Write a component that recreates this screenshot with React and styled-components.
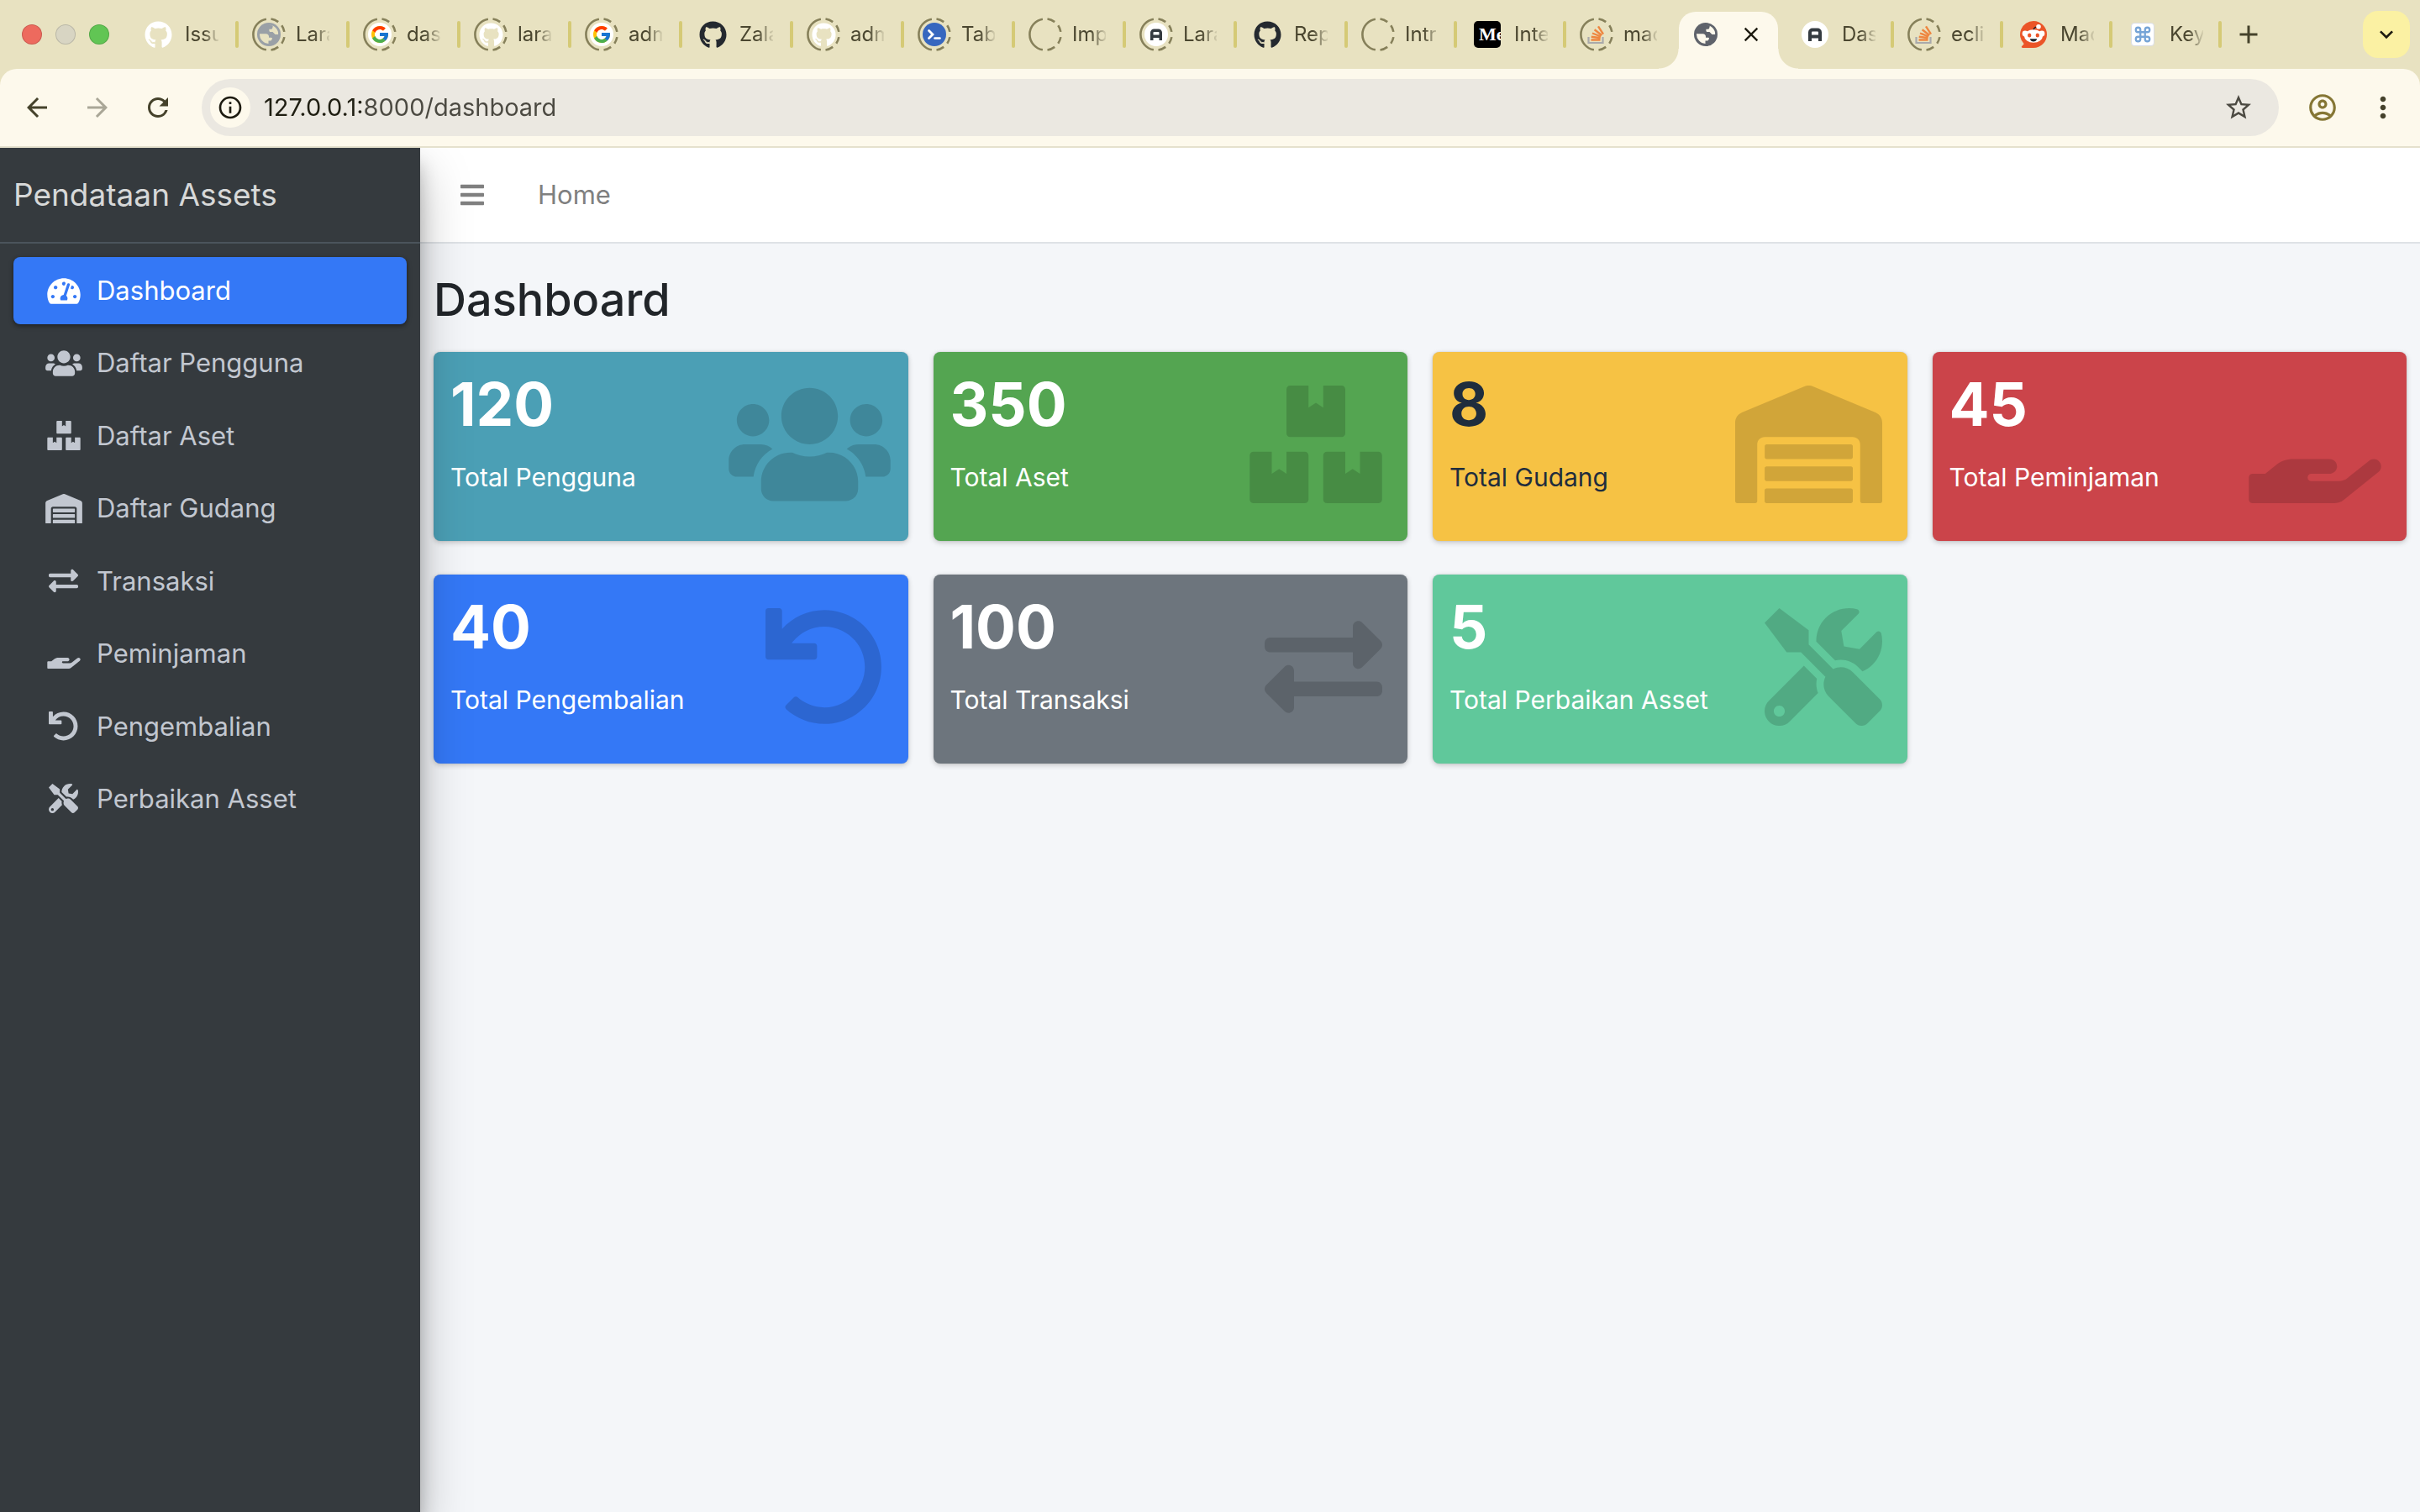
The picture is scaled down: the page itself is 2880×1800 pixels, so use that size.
import React from "react";
import styled, { createGlobalStyle, css } from "styled-components";
import {
  FaTachometerAlt,
  FaUsers,
  FaBoxes,
  FaWarehouse,
  FaExchangeAlt,
  FaHandHolding,
  FaUndo,
  FaTools,
  FaBars,
  FaGithub,
} from "react-icons/fa";
import {
  MdArrowBack,
  MdArrowForward,
  MdRefresh,
  MdInfoOutline,
  MdStarBorder,
  MdMoreVert,
  MdClose,
  MdAdd,
  MdKeyboardArrowDown,
  MdOutlineAccountCircle,
} from "react-icons/md";
import { FcGoogle } from "react-icons/fc";
import { Command } from "lucide-react";

const GlobalStyle = createGlobalStyle`
  *, *::before, *::after { box-sizing: border-box; }
  body {
    margin: 0;
    font-family: Inter, "Liberation Sans", sans-serif;
    font-size: 31px;
    line-height: 48px;
    color: #212529;
    background: #f4f6f9;
  }
  button, input { font: inherit; color: inherit; border: 0; padding: 0; background: none; }
  svg { display: block; flex: none; }
`;

const Window = styled.div`
  display: flex;
  flex-direction: column;
  min-height: 100vh;
`;

/* ---------- Browser tab strip ---------- */

const TabStrip = styled.div`
  display: flex;
  align-items: stretch;
  height: 82px;
  padding: 0 12px 0 26px;
  background: #e8e2c1;
`;

const TrafficLights = styled.div`
  display: flex;
  align-items: center;
  gap: 16px;
  margin-right: 22px;
`;

const Light = styled.span`
  width: 24px;
  height: 24px;
  border-radius: 50%;
  background: ${(p) => p.$color};
  border: 1px solid rgba(0, 0, 0, 0.14);
`;

const Tab = styled.button`
  display: flex;
  align-items: center;
  flex: none;
  width: ${(p) => (p.$wide ? 132 : 130)}px;
  padding-left: 16px;
  color: #4a462f;
  font-size: 24px;
  line-height: 30px;

  ${(p) =>
    !p.$last &&
    css`
      &::after {
        content: "";
        width: 4px;
        height: 32px;
        margin-left: auto;
        border-radius: 2px;
        background: #d5ca76;
      }
    `}
`;

const TabLabel = styled.span`
  width: 40px;
  margin-left: 12px;
  overflow: hidden;
  text-align: left;
  white-space: nowrap;
  mask-image: linear-gradient(to right, #000 22px, transparent 42px);
`;

const ActiveTab = styled.div`
  position: relative;
  display: flex;
  align-items: center;
  justify-content: space-between;
  flex: none;
  width: 118px;
  margin: 14px 8px 0 4px;
  padding: 0 18px 14px;
  border-radius: 20px 20px 0 0;
  background: #fdf9ec;

  &::before,
  &::after {
    content: "";
    position: absolute;
    bottom: 0;
    width: 24px;
    height: 24px;
  }
  &::before {
    right: 100%;
    background: radial-gradient(circle at 0 0, transparent 23px, #fdf9ec 24px);
  }
  &::after {
    left: 100%;
    background: radial-gradient(circle at 100% 0, transparent 23px, #fdf9ec 24px);
  }
`;

const IconButton = styled.button`
  display: flex;
  align-items: center;
  justify-content: center;
  flex: none;
  width: ${(p) => p.$size}px;
  height: ${(p) => p.$size}px;
  color: ${(p) => p.$color || "#45422b"};
`;

const NewTab = styled(IconButton)`
  align-self: center;
  margin-left: 14px;
`;

const TabSearch = styled.button`
  display: flex;
  align-items: center;
  justify-content: center;
  align-self: center;
  width: 56px;
  height: 56px;
  margin-left: auto;
  border-radius: 18px;
  background: #fbf1a3;
  color: #1d1b10;
`;

const FaviconBox = styled.span`
  display: grid;
  place-items: center;
  flex: none;
  width: 40px;
  height: 40px;

  > * {
    grid-area: 1 / 1;
  }
`;

const Disc = styled.span`
  display: grid;
  place-items: center;
  width: ${(p) => p.$size}px;
  height: ${(p) => p.$size}px;
  border-radius: 50%;
  background: #fff;
`;

const MediumLogo = styled.span`
  width: 32px;
  height: 32px;
  padding-left: 6px;
  overflow: hidden;
  border-radius: 5px;
  background: #000;
  color: #fff;
  font-family: "Liberation Serif", serif;
  font-weight: 700;
  font-size: 22px;
  line-height: 32px;
  text-align: left;
`;

const KeyCap = styled.span`
  display: grid;
  place-items: center;
  width: 28px;
  height: 28px;
  border-radius: 4px;
  border: 1px solid #d9dce4;
  background: #fff;
  color: #76a4d6;
`;

const LoadingRing = () => (
  <svg width="40" height="40" viewBox="0 0 40 40" fill="none" stroke="#86805a" strokeWidth="2.6">
    <circle
      cx="20"
      cy="20"
      r="18.6"
      pathLength="360"
      transform="rotate(-90 20 20)"
      strokeDasharray="29 18 25 20 25 18 29 18 160 18"
      strokeDashoffset="-8"
    />
  </svg>
);

const GlobeMark = ({ body, land }) => (
  <svg width="28" height="28" viewBox="0 0 28 28">
    <circle cx="14" cy="14" r="14" fill={body} />
    <g fill={land}>
      <path d="M3 13.200h7.500c2.200 0 3.500 1.300 3.500 3.300v1.200h2.600c1.300 0 1.700 1 1.200 1.900l-.9 1.300c-.3.500-.9.700-1.500.7h-1.900v3.300A11.200 11.200 0 0 1 3 13.200z" />
      <path d="M11.300 3.100c3-.7 5.500-.2 7.500 1l-.6 2.300c-.3.900-1 1.300-2 1.300h-1.800v1.800c0 .9.6 1.500 1.500 1.500h2.600l3 3h3.600c0-1 .1-1.900-.3-3.400-1.500-5-6.800-9-13.500-7.500z" />
    </g>
  </svg>
);

const AdminMark = ({ size }) => (
  <svg width={size} height={size} viewBox="0 0 32 32">
    <circle cx="16" cy="16" r="16" fill="#fff" />
    <path d="M10 24V13.500a3 3 0 0 1 3-3h6a3 3 0 0 1 3 3V24M10 18.500h12" fill="none" stroke="#343a40" strokeWidth="4" />
  </svg>
);

const StackMark = () => (
  <svg width="26" height="26" viewBox="0 0 26 26" fill="none">
    <path d="M3.500 16v7h17v-7" stroke="#a9a9ab" strokeWidth="2.200" />
    <g stroke="#ee8640" strokeWidth="2.400">
      <path d="M6.500 19.500h11M6.700 15.700l11 1.500M8 11.500l10.200 4M10.600 7.300l8.600 6.700M15 3.400l6 9.200" />
    </g>
  </svg>
);

const TerminalMark = () => (
  <svg width="28" height="28" viewBox="0 0 28 28" fill="none">
    <circle cx="14" cy="14" r="14" fill="#3767bf" />
    <path d="M7.500 9.500l4.500 4.500-4.500 4.500" stroke="#fff" strokeWidth="2.800" strokeLinecap="round" />
    <path d="M14.500 18.500h6" stroke="#fff" strokeWidth="2.600" strokeLinecap="round" />
  </svg>
);

const RedditMark = () => (
  <svg width="32" height="32" viewBox="0 0 32 32">
    <path d="M16 0a16 16 0 1 1 0 32H3.200c-1.400 0-1.900-1.200-1-2.100l2.500-2.600A16 16 0 0 1 16 0z" fill="#eb5528" />
    <path d="M16 11.500c.2-3 1.500-4.500 4.600-4.400" fill="none" stroke="#16202a" strokeWidth="1.400" />
    <circle cx="22" cy="6.800" r="2.800" fill="#fff" />
    <circle cx="6" cy="15" r="3.400" fill="#fff" />
    <circle cx="26" cy="15" r="3.400" fill="#fff" />
    <ellipse cx="16" cy="18" rx="11" ry="7.800" fill="#fff" />
    <ellipse cx="11.200" cy="17" rx="2.200" ry="2.500" fill="#eb5528" />
    <ellipse cx="20.800" cy="17" rx="2.200" ry="2.500" fill="#eb5528" />
    <path d="M11.800 21.200h8.400c-.6 2.200-2.200 3.200-4.200 3.200s-3.600-1-4.200-3.200z" fill="#16202a" />
  </svg>
);

const FAVICONS = {
  githubWhite: <FaGithub size={33} color="#fff" />,
  githubDark: <FaGithub size={33} color="#24292f" />,
  githubSmall: <FaGithub size={29} color="#fff" />,
  globe: <GlobeMark body="#9aa0a6" land="#e8e2c1" />,
  google: (
    <Disc $size={28}>
      <FcGoogle size={24} />
    </Disc>
  ),
  terminal: <TerminalMark />,
  adminSmall: <AdminMark size={28} />,
  admin: <AdminMark size={32} />,
  medium: <MediumLogo>Me</MediumLogo>,
  stack: <StackMark />,
  reddit: <RedditMark />,
  command: (
    <KeyCap>
      <Command size={22} strokeWidth={2.5} />
    </KeyCap>
  ),
};

const TABS_BEFORE = [
  { label: "Issu", icon: "githubWhite", wide: true },
  { label: "Lara", icon: "globe", ring: true, wide: true },
  { label: "das", icon: "google", ring: true, wide: true },
  { label: "lara", icon: "githubSmall", ring: true, wide: true },
  { label: "adm", icon: "google", ring: true, wide: true },
  { label: "Zala", icon: "githubDark", wide: true },
  { label: "adm", icon: "githubSmall", ring: true, wide: true },
  { label: "Tab", icon: "terminal", ring: true, wide: true },
  { label: "Imp", icon: "none", ring: true, wide: true },
  { label: "Lara", icon: "adminSmall", ring: true, wide: true },
  { label: "Rep", icon: "githubDark", wide: true },
  { label: "Intr", icon: "none", ring: true },
  { label: "Inte", icon: "medium" },
  { label: "mac", icon: "stack", ring: true, last: true },
];

const TABS_AFTER = [
  { label: "Das", icon: "admin" },
  { label: "ecli", icon: "stack", ring: true },
  { label: "Mac", icon: "reddit" },
  { label: "Key", icon: "command" },
];

const BrowserTab = ({ tab }) => (
  <Tab type="button" $wide={tab.wide} $last={tab.last}>
    <FaviconBox>
      {tab.ring && <LoadingRing />}
      {FAVICONS[tab.icon]}
    </FaviconBox>
    <TabLabel>{tab.label}</TabLabel>
  </Tab>
);

/* ---------- Browser toolbar ---------- */

const ToolbarBack = styled.div`
  background: #e8e2c1;
`;

const Toolbar = styled.div`
  display: flex;
  align-items: center;
  gap: 28px;
  height: 94px;
  padding: 0 20px;
  border-bottom: 2px solid #e5e1cd;
  border-radius: 20px 20px 0 0;
  background: #fdf9ec;
`;

const ToolbarGroup = styled.div`
  display: flex;
  gap: 24px;
`;

const AddressBar = styled.form`
  display: flex;
  align-items: center;
  flex: 1;
  height: 68px;
  padding: 0 24px 0 10px;
  border-radius: 34px;
  background: #ebe8e1;
`;

const SiteInfo = styled(IconButton)`
  border-radius: 50%;
  background: #fdf9ec;
`;

const AddressInput = styled.input`
  flex: 1;
  min-width: 0;
  margin: 0 16px;
  outline: none;
  font-size: 29px;
  line-height: 40px;
  color: transparent;
  background: linear-gradient(to right, #1f1e12 118px, #4b4941 118px);
  background-clip: text;
  -webkit-background-clip: text;
`;

/* ---------- Application ---------- */

const Page = styled.div`
  display: flex;
  flex: 1;
  overflow: hidden;
`;

const Sidebar = styled.aside`
  position: relative;
  z-index: 1;
  flex: none;
  width: 500px;
  background: #353a3e;
  box-shadow: 0 28px 56px rgba(0, 0, 0, 0.25), 0 20px 20px rgba(0, 0, 0, 0.22);
`;

const Brand = styled.a`
  display: flex;
  align-items: center;
  height: 114px;
  padding-left: 16px;
  border-bottom: 2px solid #4b545c;
  color: #d7d8d8;
  font-size: 37px;
  font-weight: 400;
  text-decoration: none;
  white-space: nowrap;
`;

const Menu = styled.nav`
  display: flex;
  flex-direction: column;
  justify-content: space-between;
  min-height: 717px;
  padding: 16px;
`;

const MenuLink = styled.a`
  display: flex;
  align-items: center;
  gap: 12px;
  height: 80px;
  padding: 0 32px;
  border-radius: 8px;
  color: #c2c7d0;
  text-decoration: none;
  white-space: nowrap;

  ${(p) =>
    p.$active &&
    css`
      background: #3478f6;
      color: #fff;
      box-shadow: 0 2px 6px rgba(0, 0, 0, 0.24), 0 2px 4px rgba(0, 0, 0, 0.24);
    `}
`;

const MenuIcon = styled.span`
  display: flex;
  justify-content: center;
  flex: none;
  width: 55px;
`;

const Main = styled.main`
  flex: 1;
  min-width: 0;
`;

const TopNav = styled.header`
  display: flex;
  align-items: center;
  gap: 64px;
  height: 114px;
  padding-left: 48px;
  border-bottom: 2px solid #dee2e6;
  background: #fff;
  color: #808080;
`;

const MenuToggle = styled.button`
  display: flex;
`;

const HomeLink = styled.a`
  color: inherit;
  text-decoration: none;
`;

const Content = styled.div`
  padding: 32px 16px;
`;

const Title = styled.h1`
  margin: 0 0 28px;
  font-size: 54px;
  font-weight: 500;
  line-height: 69px;
`;

const CardGrid = styled.div`
  display: grid;
  grid-template-columns: repeat(4, minmax(0, 1fr));
  gap: 40px 30px;
`;

const Card = styled.section`
  position: relative;
  padding: 20px;
  border-radius: 8px;
  background: ${(p) => p.$bg};
  color: ${(p) => (p.$dark ? "#1f2d3d" : "#fff")};
  box-shadow: 0 0 2px rgba(0, 0, 0, 0.125), 0 2px 6px rgba(0, 0, 0, 0.2);
`;

const CardValue = styled.h3`
  margin: 0 0 20px;
  font-size: 71px;
  font-weight: 700;
  line-height: 85px;
`;

const CardLabel = styled.p`
  margin: 0 0 32px;
  font-size: 30px;
`;

const CardIcon = styled.div`
  position: absolute;
  top: ${(p) => (p.$raised ? 33 : 40)}px;
  right: ${(p) => (p.$raised ? 21 : 30)}px;
  color: rgba(0, 0, 0, 0.15);
`;

/* ratio: the drawing's width for a height of one em. */
const ICONS = {
  gauge: { Icon: FaTachometerAlt, ratio: 1.125 },
  users: { Icon: FaUsers, ratio: 1.25 },
  boxes: { Icon: FaBoxes, ratio: 1.125 },
  warehouse: { Icon: FaWarehouse, ratio: 1.25 },
  exchange: { Icon: FaExchangeAlt, ratio: 1 },
  hand: { Icon: FaHandHolding, ratio: 1.125 },
  undo: { Icon: FaUndo, ratio: 1 },
  tools: { Icon: FaTools, ratio: 1 },
  bars: { Icon: FaBars, ratio: 0.875 },
};

const GlyphBox = styled.span`
  display: flex;

  svg {
    width: ${(p) => p.$w}px;
    height: ${(p) => p.$em}px;
  }
`;

const Glyph = ({ name, em }) => {
  const { Icon, ratio } = ICONS[name];
  return (
    <GlyphBox $em={em} $w={Math.ceil(em * ratio)}>
      <Icon />
    </GlyphBox>
  );
};

const MENU = [
  { label: "Dashboard", icon: "gauge", active: true },
  { label: "Daftar Pengguna", icon: "users" },
  { label: "Daftar Aset", icon: "boxes" },
  { label: "Daftar Gudang", icon: "warehouse" },
  { label: "Transaksi", icon: "exchange" },
  { label: "Peminjaman", icon: "hand" },
  { label: "Pengembalian", icon: "undo" },
  { label: "Perbaikan Asset", icon: "tools" },
];

const CARDS = [
  { value: 120, label: "Total Pengguna", bg: "#4b9fb5", icon: "users", raised: true },
  { value: 350, label: "Total Aset", bg: "#54a551", icon: "boxes" },
  { value: 8, label: "Total Gudang", bg: "#f6c244", icon: "warehouse", dark: true },
  { value: 45, label: "Total Peminjaman", bg: "#cb444a", icon: "hand" },
  { value: 40, label: "Total Pengembalian", bg: "#3478f6", icon: "undo" },
  { value: 100, label: "Total Transaksi", bg: "#6d757d", icon: "exchange" },
  { value: 5, label: "Total Perbaikan Asset", bg: "#60c89b", icon: "tools" },
];

export default function App() {
  return (
    <Window>
      <GlobalStyle />
      <TabStrip>
        <TrafficLights>
          <Light $color="#ed6a5e" />
          <Light $color="#d8d5c3" />
          <Light $color="#61c554" />
        </TrafficLights>
        {TABS_BEFORE.map((tab, i) => (
          <BrowserTab key={i} tab={tab} />
        ))}
        <ActiveTab>
          <GlobeMark body="#5f636b" land="#fdf9ec" />
          <IconButton type="button" aria-label="Close tab" $size={28} $color="#1d1b10">
            <MdClose size={28} />
          </IconButton>
        </ActiveTab>
        {TABS_AFTER.map((tab, i) => (
          <BrowserTab key={i} tab={tab} />
        ))}
        <NewTab type="button" aria-label="New tab" $size={36}>
          <MdAdd size={36} />
        </NewTab>
        <TabSearch type="button" aria-label="Search tabs">
          <MdKeyboardArrowDown size={32} />
        </TabSearch>
      </TabStrip>

      <ToolbarBack>
        <Toolbar>
          <ToolbarGroup>
            <IconButton type="button" aria-label="Back" $size={48}>
              <MdArrowBack size={36} />
            </IconButton>
            <IconButton type="button" aria-label="Forward" $size={48} $color="#aaa797">
              <MdArrowForward size={36} />
            </IconButton>
            <IconButton type="button" aria-label="Reload" $size={48}>
              <MdRefresh size={36} />
            </IconButton>
          </ToolbarGroup>
          <AddressBar onSubmit={(e) => e.preventDefault()}>
            <SiteInfo type="button" aria-label="Site information" $size={48} $color="#1d1b10">
              <MdInfoOutline size={32} />
            </SiteInfo>
            <AddressInput type="text" aria-label="Address" defaultValue="127.0.0.1:8000/dashboard" spellCheck={false} />
            <IconButton type="button" aria-label="Bookmark" $size={48} $color="#4b4941">
              <MdStarBorder size={36} />
            </IconButton>
          </AddressBar>
          <ToolbarGroup>
            <IconButton type="button" aria-label="Profile" $size={48} $color="#857634">
              <MdOutlineAccountCircle size={38} />
            </IconButton>
            <IconButton type="button" aria-label="More" $size={48}>
              <MdMoreVert size={40} />
            </IconButton>
          </ToolbarGroup>
        </Toolbar>
      </ToolbarBack>

      <Page>
        <Sidebar>
          <Brand href="#">Pendataan Assets</Brand>
          <Menu>
            {MENU.map(({ label, icon, active }) => (
              <MenuLink key={label} href="#" $active={active}>
                <MenuIcon>
                  <Glyph name={icon} em={35} />
                </MenuIcon>
                {label}
              </MenuLink>
            ))}
          </Menu>
        </Sidebar>
        <Main>
          <TopNav>
            <MenuToggle type="button" aria-label="Toggle menu">
              <Glyph name="bars" em={32} />
            </MenuToggle>
            <HomeLink href="#">Home</HomeLink>
          </TopNav>
          <Content>
            <Title>Dashboard</Title>
            <CardGrid>
              {CARDS.map(({ value, label, bg, icon, dark, raised }) => (
                <Card key={label} $bg={bg} $dark={dark}>
                  <CardValue>{value}</CardValue>
                  <CardLabel>{label}</CardLabel>
                  <CardIcon $raised={raised}>
                    <Glyph name={icon} em={raised ? 154 : 140} />
                  </CardIcon>
                </Card>
              ))}
            </CardGrid>
          </Content>
        </Main>
      </Page>
    </Window>
  );
}
